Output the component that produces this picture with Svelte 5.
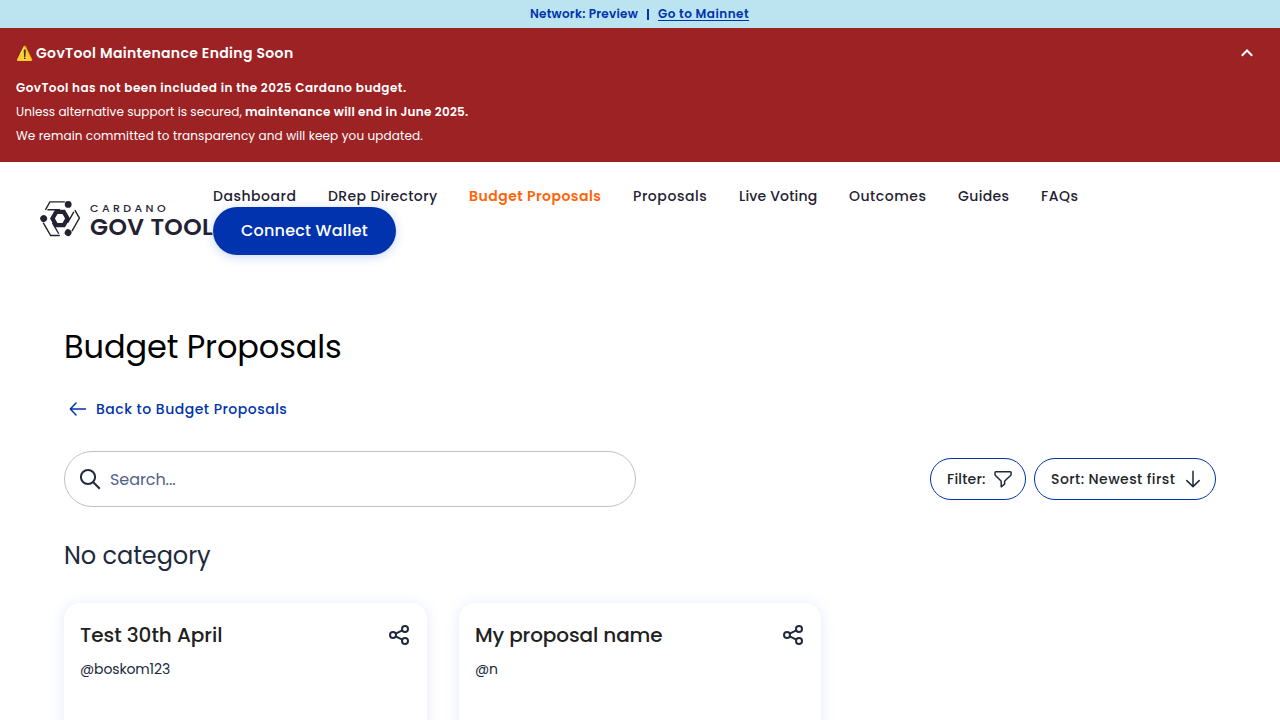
<script>
  const nav = [
    { label: 'Dashboard', width: 83 },
    { label: 'DRep Directory', width: 109 },
    { label: 'Budget Proposals', width: 132, active: true },
    { label: 'Proposals', width: 74 },
    { label: 'Live Voting', width: 78 },
    { label: 'Outcomes', width: 77 },
    { label: 'Guides', width: 51 },
    { label: 'FAQs', width: 37 }
  ];
  const cards = [
    { title: 'Test 30th April', user: '@boskom123', titleWidth: 142.5, userWidth: 90 },
    { title: 'My proposal name', user: '@n', titleWidth: 187.5, userWidth: 23 }
  ];

  // Tracks a label out (or in) so that it fills its allotted width.
  function track(node, width) {
    const range = document.createRange();
    range.selectNodeContents(node);
    const apply = () => {
      node.style.letterSpacing = '0px';
      const natural = range.getBoundingClientRect().width;
      node.style.letterSpacing = `${(width - natural) / node.textContent.length}px`;
    };
    apply();
    document.fonts.ready.then(apply);
  }
</script>

<div class="network">
  <span use:track={108}>Network: Preview</span>
  <i></i>
  <a href="#mainnet" use:track={91}>Go to Mainnet</a>
</div>

<section class="notice">
  <div class="notice-head">
    <span class="warn">⚠️</span>
    <strong use:track={257.5}>GovTool Maintenance Ending Soon</strong>
    <svg class="chevron" width="24" height="24" viewBox="0 0 24 24">
      <path d="m6.8 14.7 5.2-5.2 5.2 5.2" fill="none" stroke="#fff" stroke-width="2" />
    </svg>
  </div>
  <p><b use:track={390.5}>GovTool has not been included in the 2025 Cardano budget.</b></p>
  <p class="split"><span use:track={226}>Unless alternative support is secured,</span><b use:track={223.5}>maintenance will end in June 2025.</b></p>
  <p><span use:track={407}>We remain committed to transparency and will keep you updated.</span></p>
</section>

<header>
  <div class="logo">
    <svg width="41" height="36" viewBox="0 0 41 36">
      {#each [0, 120, 240] as turn}
        <g transform="rotate({turn} 20 17.5)">
          <path d="M5.4 8.8 9.9.9h15M7.4 8.8H20" fill="none" stroke="#242232" stroke-width="1.4" />
          <circle cx="28.2" cy="3.4" r="3.4" fill="#242232" />
        </g>
      {/each}
      <path fill-rule="evenodd" fill="#242232" d="M15 8.8h10l5 8.7-5 8.7H15l-5-8.7zM17.5 13.1l-2.6 4.4 2.6 4.4h5l2.6-4.4-2.6-4.4z" />
    </svg>
    <div class="wordmark">
      <span class="cardano">CARDANO</span>
      <span class="gov">GOV TOOL</span>
    </div>
  </div>
  <div class="menu">
    <nav>
      {#each nav as item}
        <a href="#{item.label}" class:active={item.active} style:width="{item.width}px"><span use:track={item.width + 0.4}>{item.label}</span></a>
      {/each}
    </nav>
    <button class="connect"><span use:track={127}>Connect Wallet</span></button>
  </div>
</header>

<main>
  <h1><span use:track={277.7}>Budget Proposals</span></h1>
  <a class="back" href="#back">
    <svg width="20" height="20" viewBox="0 0 20 20"><path d="M17.5 10H2.5M8 4 2.3 10 8 16" fill="none" stroke="#0033ad" stroke-width="1.5" stroke-linecap="round" stroke-linejoin="round" /></svg>
    <span use:track={191.3}>Back to Budget Proposals</span>
  </a>
  <div class="toolbar">
    <div class="search">
      <svg width="24" height="24" viewBox="0 0 24 24"><g fill="none" stroke="#212a3d" stroke-width="2"><circle cx="10" cy="10" r="7.1" /><path d="m15 15 6.8 6.8" /></g></svg>
      <span use:track={65.5}>Search...</span>
    </div>
    <div class="actions">
      <button class="filter"><span use:track={38.6}>Filter:</span>
        <svg width="20" height="20" viewBox="0 0 20 20"><path d="M2.8 2.7h14.5q.8 0 .8.8v1.8q0 .7-.5 1.2L12 11.8q-.4.4-.4 1v2.4L8.2 17.8v-5q0-.6-.4-1L2.5 6.5Q2 6 2 5.3V3.5q0-.8.8-.8Z" fill="none" stroke="#212a3d" stroke-width="1.5" stroke-linejoin="round" /></svg>
      </button>
      <button class="sort"><span use:track={124.3}>Sort: Newest first</span>
        <svg width="20" height="20" viewBox="0 0 20 20"><path d="M10 2.3v15.2M3.8 11.6l6.2 6 6.2-6" fill="none" stroke="#212a3d" stroke-width="1.5" stroke-linecap="round" stroke-linejoin="round" /></svg>
      </button>
    </div>
  </div>
  <h2><span use:track={146.5}>No category</span></h2>
  <div class="cards">
    {#each cards as card}
      <article>
        <div class="card-head">
          <h3><span use:track={card.titleWidth}>{card.title}</span></h3>
          <svg width="24" height="24" viewBox="0 0 24 24"><g fill="none" stroke="#212a3d" stroke-width="2"><circle cx="18" cy="6" r="3" /><circle cx="6" cy="12" r="3" /><circle cx="18" cy="18" r="3" /><path d="m8.7 10.7 6.6-3.3M8.7 13.3l6.6 3.3" /></g></svg>
        </div>
        <p><span use:track={card.userWidth}>{card.user}</span></p>
      </article>
    {/each}
  </div>
</main>

<style>
  :global(body) { background: #fff; overflow: hidden; }
  :global(#app) { height: 720px; overflow: hidden; font-family: Poppins, Inter, sans-serif; font-feature-settings: "liga" 1; color: #242232; }
  a { color: inherit; text-decoration: none; }
  span, strong, b, a { white-space: nowrap; }
  button { font: inherit; color: inherit; padding: 0; }
  h1, h2, h3, p { margin: 0; font-weight: 400; }
  svg { flex: none; display: block; }

  .network { height: 28px; display: flex; align-items: center; justify-content: center; padding-right: 1px; background: #bce4f0; color: #0033ad; font-size: 12px; font-weight: 600; }
  .network i { width: 2px; height: 11px; margin: 0 9.5px 0 8.5px; background: #0033ad; }
  .network a { text-decoration: underline; text-decoration-thickness: 1px; text-underline-offset: 2px; }

  .notice { height: 134px; box-sizing: border-box; padding: 13px 16px; background: #9c2224; color: #fff; }
  .notice-head { height: 24px; display: flex; align-items: center; margin-bottom: 11px; font-size: 14px; }
  .warn { width: 20px; font-weight: 600; }
  .notice strong, .notice b { font-weight: 600; }
  .chevron { margin-left: auto; margin-right: 5px; }
  .notice p { font-size: 12px; line-height: 24px; }
  .split { display: flex; gap: 3px; }

  header { height: 110px; display: flex; align-items: center; padding-left: 40px; }
  .logo { width: 173px; display: flex; align-items: flex-start; gap: 9px; margin-bottom: -3px; }
  .wordmark { display: flex; flex-direction: column; }
  .cardano { height: 14px; line-height: 14px; font-size: 11px; font-weight: 500; letter-spacing: 3.4px; }
  .gov { height: 22px; line-height: 23px; font-size: 23.5px; font-weight: 600; letter-spacing: 0.4px; }
  .menu { height: 62px; position: relative; }
  nav { display: flex; gap: 32px; height: 21px; align-items: center; font-size: 14px; font-weight: 500; }
  .active { color: #ff640a; font-weight: 600; }
  .connect { display: block; width: 183px; height: 48px; border: 0; border-radius: 24px; background: #0033ad; color: #fff; font-size: 16px; font-weight: 500; box-shadow: 0 2px 10px 1px rgba(47, 98, 220, .22); padding-bottom: 1px; }

  main { padding: 52px 64px 0; }
  h1 { height: 46px; line-height: 46px; font-size: 32px; color: #000; }
  .back { height: 24px; margin-top: 27px; padding-left: 4px; display: flex; align-items: center; gap: 8px; color: #0033ad; font-size: 14px; font-weight: 500; }
  .toolbar { display: flex; align-items: center; justify-content: space-between; margin-top: 30px; }
  .search { width: 572px; height: 56px; box-sizing: border-box; border: 1px solid #c1c1c1; border-radius: 28px; display: flex; align-items: center; gap: 8px; padding-left: 13px; font-size: 16px; color: #506288; }
  .actions { display: flex; gap: 8px; }
  .actions button { height: 42px; box-sizing: border-box; border: 1px solid #0033ad; border-radius: 21px; background: #fff; display: flex; align-items: center; justify-content: space-between; padding: 0 12px 0 16px; font-size: 14px; font-weight: 500; color: #212529; }
  .filter { width: 96px; }
  .sort { width: 182px; }
  h2 { height: 32px; line-height: 33px; margin-top: 32px; font-size: 24px; color: #212a3d; }
  .cards { display: grid; grid-template-columns: 363px 362px; gap: 32px; margin-top: 32px; }
  article { height: 200px; box-sizing: border-box; padding: 16px; border-radius: 16px; background: #fff; box-shadow: 0 1px 14px rgba(80, 110, 235, .15); }
  .card-head { height: 32px; display: flex; align-items: center; justify-content: space-between; }
  h3 { font-size: 20px; line-height: 32px; font-weight: 500; color: #212121; }
  article p { margin-top: 8px; font-size: 14px; line-height: 20px; color: #212a3d; }
</style>
